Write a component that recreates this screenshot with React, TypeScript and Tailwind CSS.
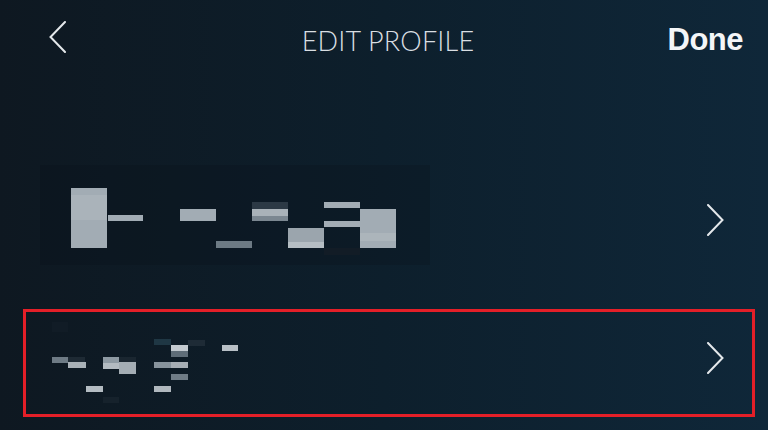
import React from "react";

function Chevron({ left = false }: { left?: boolean }) {
  return (
    <svg width="17" height="32" viewBox="0 0 17 32" fill="none" className="block shrink-0">
      <polyline
        points={left ? "16,1 1.5,16 16,31" : "1,1 15.5,16 1,31"}
        stroke="#e4e8eb"
        strokeWidth="2"
        strokeLinecap="round"
        strokeLinejoin="miter"
      />
    </svg>
  );
}

type R = [number, number, number, number, string];

const row1: R[] = [
  [40, 165, 390, 100, "rgba(8,15,22,0.22)"],
  [71, 188, 36, 60, "#a2acb4"],
  [71, 195, 36, 25, "#aab3ba"],
  [108, 215, 35, 6, "#a2acb4"],
  [180, 209, 36, 12, "#a2acb4"],
  [216, 241, 36, 7, "#6d7a84"],
  [252, 202, 36, 7, "#2c3945"],
  [252, 209, 36, 7, "#a9b2b9"],
  [252, 216, 36, 5, "#7b8791"],
  [288, 228, 36, 14, "#9ba5ad"],
  [288, 242, 36, 6, "#b5bdc3"],
  [324, 202, 36, 6, "#a2acb4"],
  [324, 221, 36, 6, "#a2acb4"],
  [324, 248, 36, 7, "#121c26"],
  [360, 209, 36, 39, "#a2acb4"],
  [360, 233, 36, 8, "#acb5bb"],
];

const row2: R[] = [
  [52, 322, 16, 10, "#111c26"],
  [52, 357, 16, 6, "#6e7b85"],
  [68, 357, 17, 5, "#1e2a34"],
  [68, 362, 18, 6, "#a9b1b7"],
  [86, 386, 17, 6, "#b4bcc2"],
  [103, 357, 16, 6, "#8e9aa3"],
  [103, 363, 16, 6, "#b3bbc1"],
  [103, 397, 16, 6, "#16222c"],
  [119, 357, 17, 5, "#1a2630"],
  [119, 362, 17, 12, "#a4adb4"],
  [154, 339, 17, 6, "#1f3744"],
  [154, 362, 17, 6, "#87939c"],
  [154, 386, 17, 6, "#b0b8be"],
  [171, 345, 17, 6, "#c3cad0"],
  [171, 351, 17, 6, "#5f6d78"],
  [171, 362, 17, 6, "#a6aeb5"],
  [171, 374, 17, 6, "#6f7c86"],
  [188, 340, 17, 6, "#1e2b36"],
  [222, 345, 16, 6, "#b8c0c6"],
];

function Mosaic({ rects, vb, w, h }: { rects: R[]; vb: string; w: number; h: number }) {
  return (
    <svg width={w} height={h} viewBox={vb} className="block shrink-0">
      {rects.map(([x, y, rw, rh, c], i) => (
        <rect key={i} x={x} y={y} width={rw} height={rh} fill={c} />
      ))}
    </svg>
  );
}

export default function App() {
  return (
    <div
      className="w-[768px] h-[430px] overflow-hidden bg-gradient-to-r from-[#0e1821] via-[#0d1f2c] to-[#0f2739] text-white"
      style={{ fontFamily: '"Liberation Sans", Arial, sans-serif' }}
    >
      {/* header */}
      <div className="grid grid-cols-[1fr_auto_1fr] items-center h-[34px] mt-[19px]">
        <div className="pl-[49px]">
          <Chevron left />
        </div>
        <div
          className="pl-[8px] mt-[7px] text-[27px] leading-none font-light text-[#d9dee2] tracking-[0.2px]"
          style={{ fontFamily: 'Lato, "Open Sans", sans-serif' }}
        >
          EDIT PROFILE
        </div>
        <div className="justify-self-end pr-[25px] text-[31px] leading-none font-bold text-[#f4f6f8] tracking-[-0.5px] mt-[5px]">
          Done
        </div>
      </div>

      {/* row 1 */}
      <div className="mt-[97px] h-[140px] flex items-center justify-between pl-[40px] pr-[44px]">
        <Mosaic rects={row1} vb="40 150 400 140" w={400} h={140} />
        <Chevron />
      </div>

      {/* row 2 */}
      <div className="mt-[19px] ml-[23px] mr-[13px] h-[108px] border-[3px] border-[#e41f28] flex items-start justify-between pr-[28px]">
        <Mosaic rects={row2} vb="26 312 300 102" w={300} h={102} />
        <div className="mt-[30px]">
          <Chevron />
        </div>
      </div>
    </div>
  );
}
